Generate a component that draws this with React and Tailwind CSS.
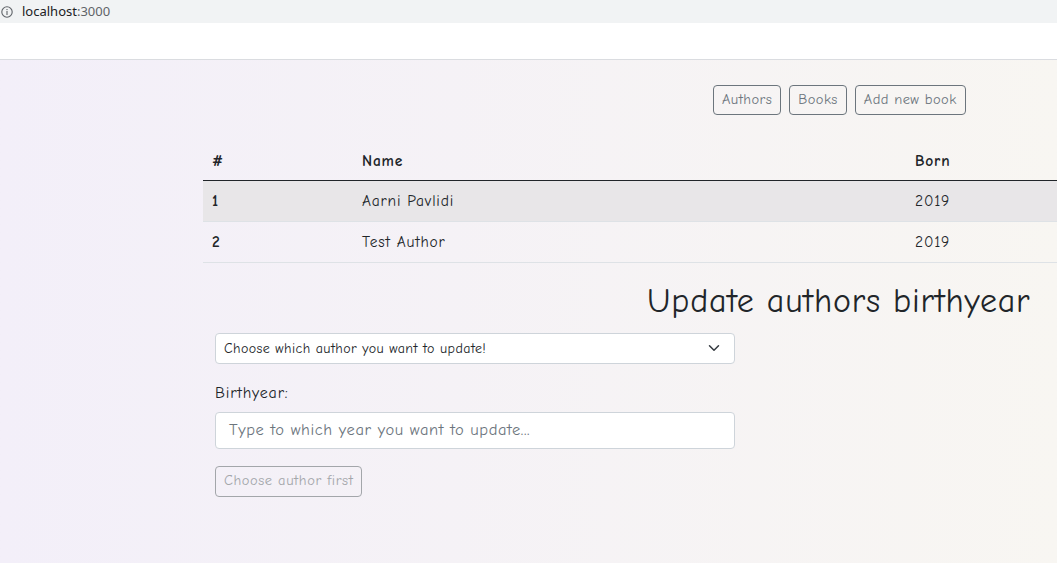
const authors = [
  { id: 1, name: "Aarni Pavlidi", born: 2019 },
  { id: 2, name: "Test Author", born: 2019 },
];

function BrowserBar() {
  return (
    <div className="shrink-0 tracking-normal">
      <div className="h-[23px] bg-[#f1f3f4] flex items-center gap-[9px] pl-[1px] font-['Noto_Sans',sans-serif] text-[13px]">
        <svg width="12" height="12" viewBox="0 0 12 12" className="text-[#5f6368]">
          <circle cx="6" cy="6" r="5.2" fill="none" stroke="currentColor" strokeWidth="1.1" />
          <rect x="5.45" y="5" width="1.1" height="4" fill="currentColor" />
          <rect x="5.45" y="3" width="1.1" height="1.1" fill="currentColor" />
        </svg>
        <span className="text-[#202124]">
          localhost<span className="text-[#5f6368]">:3000</span>
        </span>
      </div>
      <div className="h-[37px] bg-white border-b border-[#dadce0]" />
    </div>
  );
}

export default function App() {
  return (
    <div className="w-[1057px] h-[563px] overflow-hidden flex flex-col font-['Comic_Sans_MS','Comic_Neue','Noto_Sans',sans-serif] tracking-[0.05em]">
      <BrowserBar />
      <div className="flex-1 bg-gradient-to-r from-[#f3eff9] to-[#f8f6f2] overflow-hidden">
        <div className="ml-[203px] w-[1140px] pt-[25px]">
          <div className="flex gap-2 pl-[510px]">
            {["Authors", "Books", "Add new book"].map((b) => (
              <button
                key={b}
                className="h-[30px] px-[8px] border border-[#6c757d] rounded text-[14.5px] tracking-[0.03em] text-[#6c757d]"
              >
                {b}
              </button>
            ))}
          </div>

          <table className="w-full mt-[25px] border-collapse text-[15.5px] text-[#212529]">
            <thead>
              <tr className="h-[40px] border-b-[1.5px] border-[#212529]">
                <th className="w-[150px] px-[9px] pt-[3px] text-left font-bold">#</th>
                <th className="w-[553px] px-[9px] pt-[3px] text-left font-bold">Name</th>
                <th className="px-[9px] pt-[3px] text-left font-bold">Born</th>
              </tr>
            </thead>
            <tbody>
              {authors.map((a, i) => (
                <tr
                  key={a.id}
                  className={`h-[41px] border-b border-[#dee2e6] ${i === 0 ? "bg-[#e8e6e8]" : ""}`}
                >
                  <td className="px-[9px] pt-[3px] font-bold">{a.id}</td>
                  <td className="px-[9px] pt-[3px]">{a.name}</td>
                  <td className="px-[9px] pt-[3px]">{a.born}</td>
                </tr>
              ))}
            </tbody>
          </table>

          <h2 className="ml-[444px] mt-[14px] text-[34px] leading-[48px] text-[#212529]">
            Update authors birthyear
          </h2>

          <div className="pl-[12px] mt-[8px] w-[532px]">
            <div className="h-[31px] bg-white border border-[#ced4da] rounded flex items-center justify-between pl-[8px] pr-[14px] text-[14px] text-[#212529] tracking-[0.03em]">
              <span>Choose which author you want to update!</span>
              <svg width="12" height="12" viewBox="0 0 16 16" fill="none" stroke="#343a40" strokeWidth="2" strokeLinecap="round" strokeLinejoin="round">
                <path d="M2 5l6 6 6-6" />
              </svg>
            </div>
            <label className="block mt-[17px] text-[16px] text-[#212529] leading-[24px]">Birthyear:</label>
            <div className="mt-[7px] h-[37px] bg-white border border-[#ced4da] rounded flex items-center px-[13px] text-[16.5px] tracking-[0.035em] text-[#6c757d]">
              Type to which year you want to update...
            </div>
            <button
              disabled
              className="mt-[17px] h-[31px] px-[8px] border border-[#a3a6aa] rounded text-[14.5px] tracking-[0.04em] text-[#a3a6aa]"
            >
              Choose author first
            </button>
          </div>
        </div>
      </div>
    </div>
  );
}
